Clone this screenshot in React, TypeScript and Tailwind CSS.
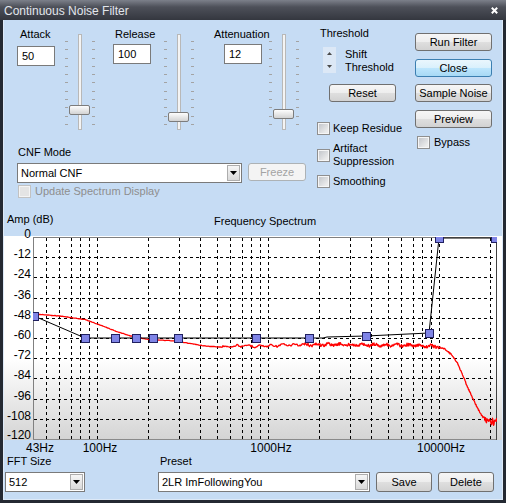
import React from "react";

const TICKS = [0, 1, 2, 3, 4, 5, 6, 7, 8, 9, 10];

function TickCol() {
  return (
    <div className="flex flex-col justify-between pb-[5px] pt-[7px]">
      {TICKS.map((i) => (
        <div key={i} className="h-px w-[3px] bg-[#a3a3a3]" />
      ))}
    </div>
  );
}

function Slider({ thumb }: { thumb: string }) {
  return (
    <div className="relative flex h-[96px] w-[30px] justify-between">
      <TickCol />
      <div className="w-[4px] border border-[#b8b8b8] bg-[#f4f4f4]" />
      <TickCol />
      <div
        className={
          "absolute left-[4px] h-[10px] w-[21px] rounded-[2px] border border-[#7c7c7c] bg-[linear-gradient(#fdfdfd,#e8e8e8_50%,#d3d3d3)] " +
          thumb
        }
      />
    </div>
  );
}

function Field({ value, className = "" }: { value: string; className?: string }) {
  return (
    <div
      className={
        "flex h-[20px] w-[38px] items-center border border-[#7a7a7a] bg-white pl-[4px] text-[11px] leading-[13px] " +
        className
      }
    >
      {value}
    </div>
  );
}

function Button({
  label,
  className = "",
  primary = false,
  disabled = false,
}: {
  label: string;
  className?: string;
  primary?: boolean;
  disabled?: boolean;
}) {
  const skin = disabled
    ? "border-[#adb2b5] bg-[#f4f4f4] text-[#a3a3a3]"
    : primary
    ? "border-[#3c7fb1] bg-[linear-gradient(#eaf6fd_0%,#d9f0fc_50%,#bee6fd_50%,#a7d9f5_100%)] text-black"
    : "border-[#707070] bg-[linear-gradient(#f6f6f6_0%,#ededed_50%,#dfdfdf_50%,#d2d2d2_100%)] text-black";
  return (
    <div
      className={
        "flex shrink-0 items-center justify-center rounded-[3px] border text-[11px] leading-[13px] " +
        skin +
        " " +
        className
      }
    >
      {label}
    </div>
  );
}

function Box({ disabled = false }: { disabled?: boolean }) {
  return (
    <div
      className={
        disabled
          ? "h-[13px] w-[13px] shrink-0 border border-[#c2c2c2] bg-[#f4f4f4] p-px"
          : "h-[13px] w-[13px] shrink-0 border border-[#8f8f8f] bg-[#f6f6f6] p-px"
      }
    >
      <div
        className={
          disabled
            ? "h-full w-full bg-[#e4e4e4]"
            : "h-full w-full bg-[linear-gradient(135deg,#c4c7cc,#ececec_85%)]"
        }
      />
    </div>
  );
}

function Combo({ text, className = "" }: { text: string; className?: string }) {
  return (
    <div className={"flex h-[20px] items-stretch border border-[#7a7a7a] bg-white " + className}>
      <div className="flex flex-1 items-center pl-[3px] text-[11px] leading-[13px]">{text}</div>
      <div className="m-px flex w-[13px] items-center justify-center border border-[#adadad] bg-[linear-gradient(#f6f6f6,#dadada)]">
        <svg width="7" height="4" viewBox="0 0 7 4">
          <path d="M0 0H7L3.5 4Z" fill="#000" />
        </svg>
      </div>
    </div>
  );
}

const KEYS: [number, number][] = [
  [33, 314],
  [60, 316],
  [85, 319.5],
  [100, 325],
  [118, 332],
  [136, 337.5],
  [150, 339.5],
  [175, 341],
  [190, 343.5],
  [205, 346],
  [220, 347],
  [232, 346],
  [260, 346],
  [290, 345],
  [330, 344.5],
  [380, 345],
  [420, 345.5],
  [437, 346.5],
  [445, 349],
  [452, 355],
  [458, 364],
  [463, 376],
  [468, 388],
  [473, 399],
  [478, 409],
  [482, 416],
  [486, 420],
  [498, 420],
];

function baseY(x: number) {
  for (let i = 0; i < KEYS.length - 1; i++) {
    const [x0, y0] = KEYS[i];
    const [x1, y1] = KEYS[i + 1];
    if (x >= x0 && x <= x1) return y0 + ((x - x0) / (x1 - x0)) * (y1 - y0);
  }
  return KEYS[KEYS.length - 1][1];
}

function rnd(i: number) {
  const s = Math.sin(i * 12.9898 + 78.233) * 43758.5453;
  return s - Math.floor(s);
}

function buildRed() {
  const pts: string[] = [];
  let x = 33;
  let n = 0;
  while (x <= 498) {
    let y = baseY(x);
    const r = rnd(n);
    const amp = x < 222 ? 0.2 : x < 300 ? 1.0 : x < 440 ? 1.5 : x < 484 ? 0.7 : 2;
    y += (r - 0.5) * 2 * amp;
    if (x > 222 && x < 440) y += Math.sin(x * 0.55) * 0.9;
    if (x >= 486 && rnd(n + 500) > 0.8) y += 3 + rnd(n + 900) * 2;
    pts.push(x.toFixed(1) + "," + y.toFixed(1));
    x += x < 300 ? 1 : 0.5;
    n++;
  }
  return pts.join(" ");
}

const RED = buildRed();

const FREQS = [
  50, 60, 70, 80, 90, 100, 200, 300, 400, 500, 600, 700, 800, 900, 1000, 2000, 3000, 4000, 5000,
  6000, 7000, 8000, 9000, 10000, 20000,
];
const fx = (f: number) => Math.round(97 + 171 * Math.log10(f / 100)) + 0.5;
const YLABELS = ["0", "-12", "-24", "-36", "-48", "-60", "-72", "-84", "-96", "-108", "-120"];
const gy = (k: number) => Math.round(237 + 20.2 * k);

const SQUARES: [number, number][] = [
  [34, 316],
  [85, 338],
  [115, 338],
  [136, 338],
  [153, 338],
  [178, 338],
  [256, 338],
  [309, 338],
  [366, 336],
  [429, 333],
  [439, 238],
  [495, 238],
];

function Chart() {
  return (
    <svg
      width="498"
      height="219"
      viewBox="4 236 498 219"
      className="block shrink-0 overflow-visible"
    >
      <defs>
        <linearGradient id="panelGrad" x1="0" y1="0" x2="0" y2="1">
          <stop offset="0" stopColor="#ffffff" />
          <stop offset="0.6" stopColor="#ffffff" />
          <stop offset="1" stopColor="#d4d4d4" />
        </linearGradient>
        <clipPath id="plotClip">
          <rect x="33" y="237" width="464" height="203" />
        </clipPath>
      </defs>
      <rect x="4" y="236" width="498" height="204" fill="url(#panelGrad)" />
      <g stroke="#000" strokeWidth="1" strokeDasharray="3 3" shapeRendering="crispEdges">
        {TICKS.slice(1, 10).map((k) => (
          <line key={"h" + k} x1="34" x2="496" y1={gy(k) + 0.5} y2={gy(k) + 0.5} />
        ))}
        {FREQS.map((f) => (
          <line key={"v" + f} x1={fx(f)} x2={fx(f)} y1="238" y2="439" />
        ))}
      </g>
      <g shapeRendering="crispEdges">
        <line x1="33.5" x2="33.5" y1="237" y2="440" stroke="#808080" />
        <line x1="33" x2="497" y1="237.5" y2="237.5" stroke="#808080" />
        <line x1="33" x2="497" y1="439.5" y2="439.5" stroke="#8a8a8a" />
        <line x1="496.5" x2="496.5" y1="237" y2="440" stroke="#404040" />
      </g>
      <g clipPath="url(#plotClip)">
        <polyline points={RED} fill="none" stroke="#ff0000" strokeWidth="1.3" strokeLinejoin="round" />
        <polyline
          points="34,316 85,338 323,338 327,337 366,336 429,333 439,238 496,238"
          fill="none"
          stroke="#000"
          strokeWidth="1"
        />
        {SQUARES.map(([cx, cy], i) => (
          <rect
            key={i}
            x={cx - 3.5}
            y={cy - 3.5}
            width="8"
            height="8"
            fill="#7f84e6"
            stroke="#202060"
            strokeWidth="1"
          />
        ))}
      </g>
      <g fontSize="12" fill="#000">
        {YLABELS.map((t, k) => (
          <text key={t} x="31" y={k === 10 ? gy(k) : gy(k) + 1} textAnchor="end">
            {t}
          </text>
        ))}
        <text x="26" y="452">43Hz</text>
        <text x="100" y="452" textAnchor="middle">100Hz</text>
        <text x="271" y="452" textAnchor="middle">1000Hz</text>
        <text x="441" y="452" textAnchor="middle">10000Hz</text>
      </g>
    </svg>
  );
}

export default function App() {
  return (
    <div className="flex h-[503px] w-[506px] flex-col bg-[#242932] font-['Liberation_Sans',Arial,sans-serif] text-black">
      <div className="flex h-[20px] shrink-0 items-start justify-between bg-[linear-gradient(#7c808a,#4d5059_35%,#34373f)] pl-[4px] pr-[8px] pt-[4px]">
        <span className="text-[12px] leading-[14px] text-[#e2e6ec]">Continuous Noise Filter</span>
        <svg className="mt-[3px]" width="7" height="7" viewBox="0 0 7 7">
          <path d="M0.8 0.8L6.2 6.2M6.2 0.8L0.8 6.2" stroke="#ffffff" strokeWidth="2" />
        </svg>
      </div>
      <div className="flex min-h-0 flex-1 px-[3px] pb-[3px]">
        <div className="flex flex-1 flex-col border-x border-b border-[#dde9f7] bg-[#c6dcf4] text-[11px] leading-[13px]">
          <div className="flex h-[180px] shrink-0">
            <div className="flex w-[306px] shrink-0 flex-col">
              <div className="flex h-[110px] items-start">
                <div className="ml-[13px] mt-[8px] flex w-[38px] flex-col">
                  <span className="pl-[3px]">Attack</span>
                  <Field value="50" className="mt-[5px]" />
                </div>
                <div className="ml-[10px] mt-[14px]">
                  <Slider thumb="top-[71px]" />
                </div>
                <div className="ml-[18px] mt-[8px] flex w-[38px] flex-col">
                  <span className="pl-[2px]">Release</span>
                  <Field value="100" className="mt-[3px]" />
                </div>
                <div className="ml-[13px] mt-[14px]">
                  <Slider thumb="top-[78px]" />
                </div>
                <div className="ml-[20px] mt-[8px] flex w-[48px] flex-col">
                  <span className="whitespace-nowrap">Attenuation</span>
                  <Field value="12" className="ml-[10px] mt-[3px]" />
                </div>
                <div className="ml-[7px] mt-[14px]">
                  <Slider thumb="top-[75px]" />
                </div>
              </div>
              <span className="ml-[14px] mt-[16px]">CNF Mode</span>
              <div className="mt-[4px] flex items-start">
                <Combo text="Normal CNF" className="ml-[13px] w-[225px]" />
                <Button label="Freeze" disabled className="ml-[6px] h-[18px] w-[58px]" />
              </div>
              <div className="ml-[14px] mt-[2px] flex items-center">
                <Box disabled />
                <span className="ml-[4px] text-[#8e8e8e]">Update Spectrum Display</span>
              </div>
            </div>
            <div className="flex w-[105px] shrink-0 flex-col">
              <span className="ml-[10px] mt-[7px]">Threshold</span>
              <div className="ml-[13px] mt-[7px] flex items-start">
                <div className="flex h-[26px] w-[13px] flex-col items-center justify-around bg-[#dce8f6]">
                  <svg width="5" height="3" viewBox="0 0 5 3">
                    <path d="M0 3H5L2.5 0Z" fill="#4a4a4a" />
                  </svg>
                  <svg width="5" height="3" viewBox="0 0 5 3">
                    <path d="M0 0H5L2.5 3Z" fill="#4a4a4a" />
                  </svg>
                </div>
                <div className="ml-[9px] mt-px flex flex-col">
                  <span>Shift</span>
                  <span>Threshold</span>
                </div>
              </div>
              <Button label="Reset" className="ml-[19px] mt-[10px] h-[18px] w-[67px]" />
              <div className="ml-[7px] mt-[20px] flex items-center">
                <Box />
                <span className="ml-[3px] whitespace-nowrap">Keep Residue</span>
              </div>
              <div className="ml-[7px] mt-[7px] flex items-center">
                <Box />
                <div className="ml-[3px] flex flex-col">
                  <span>Artifact</span>
                  <span>Suppression</span>
                </div>
              </div>
              <div className="ml-[7px] mt-[7px] flex items-center">
                <Box />
                <span className="ml-[3px]">Smoothing</span>
              </div>
            </div>
            <div className="flex w-[77px] shrink-0 flex-col">
              <Button label="Run Filter" className="mt-[13px] h-[18px] w-[77px]" />
              <Button label="Close" primary className="mt-[8px] h-[18px] w-[77px]" />
              <Button label="Sample Noise" className="mt-[7px] h-[18px] w-[77px]" />
              <Button label="Preview" className="mt-[8px] h-[18px] w-[77px]" />
              <div className="ml-[2px] mt-[8px] flex items-center">
                <Box />
                <span className="ml-[4px]">Bypass</span>
              </div>
            </div>
          </div>
          <div className="flex h-[36px] shrink-0">
            <span className="ml-[3px] mt-[13px] w-[207px]">Amp (dB)</span>
            <span className="mt-[15px]">Frequency Spectrum</span>
          </div>
          <Chart />
          <div className="flex flex-1 items-start">
            <div className="ml-[1px] flex w-[80px] flex-col">
              <span className="pl-[2px]">FFT Size</span>
              <Combo text="512" className="mt-[4px] w-[80px]" />
            </div>
            <div className="ml-[73px] flex w-[212px] flex-col">
              <span className="pl-[2px]">Preset</span>
              <Combo text="2LR ImFollowingYou" className="mt-[4px] w-[212px]" />
            </div>
            <Button label="Save" className="ml-[6px] mt-[17px] h-[20px] w-[56px]" />
            <Button label="Delete" className="ml-[6px] mt-[17px] h-[20px] w-[56px]" />
          </div>
        </div>
      </div>
    </div>
  );
}
